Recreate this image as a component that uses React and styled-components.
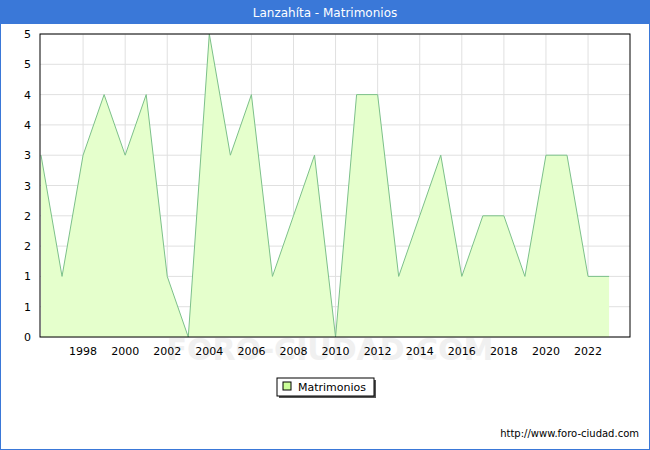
import React from "react";
import styled, { createGlobalStyle } from "styled-components";

const G = createGlobalStyle`
  body { margin:0; font-family:"DejaVu Sans", Verdana, sans-serif; }
`;
const Frame = styled.div`
  width:650px; height:450px; box-sizing:border-box; border:1px solid #3a78d8;
  display:flex; flex-direction:column; background:#fff; position:relative;
`;
const Title = styled.div`
  height:23px; background:#3a78d8; color:#fff; font-size:12px;
  display:flex; align-items:center; justify-content:center; flex-shrink:0;
`;
const Url = styled.div`
  position:absolute; right:10px; bottom:10px; font-size:10px; color:#000;
`;

const data = [3,1,3,4,3,4,1,0,5,3,4,1,2,3,0,4,4,1,2,3,1,2,2,1,3,3,1,1];
const x0 = 41, dx = 21.04, yb = 337, k = 60.6;
const X = i => x0 + i * dx;
const Y = v => yb - v * k;

function Chart() {
  const pts = data.map((v, i) => `${X(i)},${Y(v)}`).join(" ");
  const area = `${X(0)},${yb} ${pts} ${X(data.length - 1)},${yb}`;
  const ticks = [0,1,1,2,2,3,3,4,4,5,5];
  return (
    <svg width="650" height="426" viewBox="0 23 650 426" style={{ display: "block", position: "absolute", top: 22, left: -1 }}>
      <text x="330" y="360" fontSize="30" fill="#f0f0f0" textAnchor="middle" fontFamily="DejaVu Sans" fontWeight="bold">FORO-CIUDAD.COM</text>
      {ticks.map((t, i) => {
        const y = yb - i * 30.3;
        return <g key={i}>
          <line x1="40" x2="630" y1={y} y2={y} stroke="#e0e0e0" />
          <text x="31" y={y + 4} fontSize="11" textAnchor="end" fill="#000">{t}</text>
        </g>;
      })}
      {Array.from({ length: 13 }, (_, j) => {
        const x = X(2 + 2 * j);
        return <g key={j}>
          <line x1={x} x2={x} y1="34" y2={yb} stroke="#e0e0e0" />
          <text x={x} y="355" fontSize="11" textAnchor="middle">{1998 + 2 * j}</text>
        </g>;
      })}
      <polygon points={area} fill="#e5ffcc" />
      <polyline points={pts} fill="none" stroke="#7cc08a" strokeWidth="1" />
      <rect x="40" y="34" width="590" height="303" fill="none" stroke="#000" />
      <rect x="279" y="380" width="97" height="18" fill="#555" />
      <rect x="277" y="378" width="97" height="18" fill="#fff" stroke="#000" />
      <rect x="283" y="382" width="8" height="8" fill="#ccff99" stroke="#000" />
      <text x="298" y="391" fontSize="11">Matrimonios</text>
    </svg>
  );
}

export default function App() {
  return (
    <Frame>
      <G />
      <Title>Lanzahíta - Matrimonios</Title>
      <Chart />
      <Url>http://www.foro-ciudad.com</Url>
    </Frame>
  );
}
